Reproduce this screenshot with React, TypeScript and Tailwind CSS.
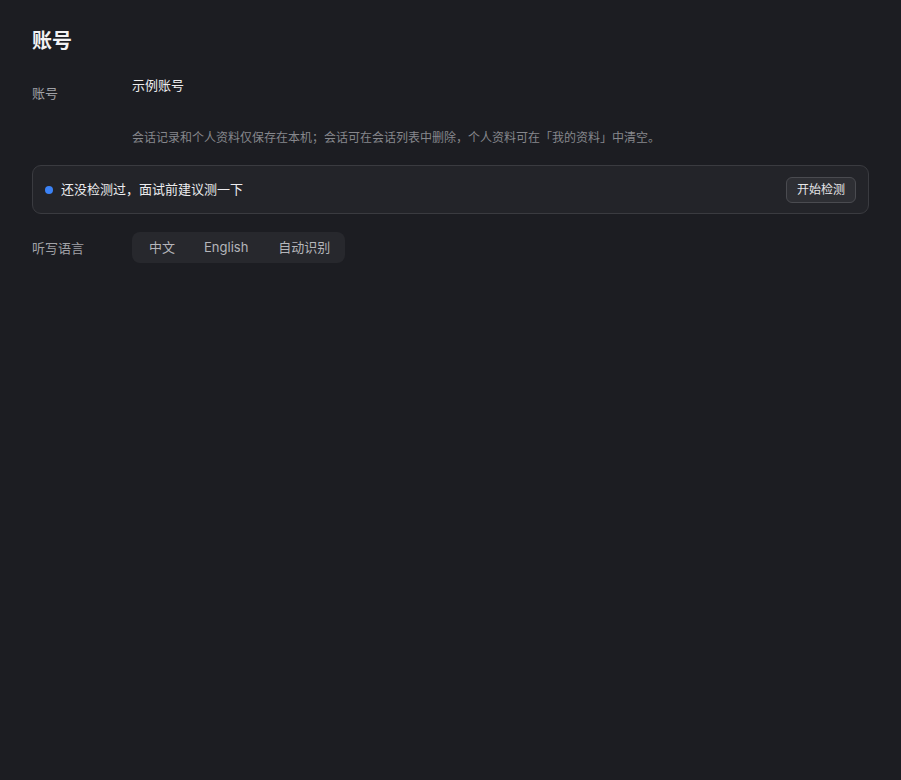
import React from "react";

export default function App() {
  return (
    <div
      className="min-h-[780px] w-full bg-[#1c1d22] px-8 text-[#e6e6e8]"
      style={{ fontFamily: 'Inter, "Noto Sans CJK SC", sans-serif' }}
    >
      <div className="pt-[27px] text-[20px] font-bold leading-[28px] text-[#f2f2f4]">账号</div>
      <div className="mt-[18px] flex">
        <div className="w-[100px] pt-[11px] text-[13px] leading-[18px] text-[#a0a1a6]">账号</div>
        <div className="pt-[3px] text-[13px] leading-[18px] text-[#ececee]">示例账号</div>
      </div>
      <div className="ml-[100px] mt-[27px] text-[12px] leading-[18px] text-[#86878c]">
        会话记录和个人资料仅保存在本机；会话可在会话列表中删除，个人资料可在「我的资料」中清空。
      </div>
      <div className="mt-[18px] flex h-[49px] items-center rounded-[9px] border border-[#3a3b40] bg-[#232429] pl-[12px] pr-[12px]">
        <span className="h-[8px] w-[8px] rounded-full bg-[#3b82f6]" />
        <span className="ml-[8px] text-[13px] text-[#ececee]">还没检测过，面试前建议测一下</span>
        <button className="ml-auto h-[26px] rounded-[6px] border border-[#4a4b50] bg-[#2e2f34] px-[10px] text-[12px] text-[#e6e6e8]">
          开始检测
        </button>
      </div>
      <div className="mt-[18px] flex items-center">
        <div className="w-[100px] pt-[2px] text-[13px] text-[#a0a1a6]">听写语言</div>
        <div className="flex h-[31px] items-center rounded-[8px] bg-[#27282d] pl-[3px] pr-0 text-[13px] text-[#b4b5ba]">
          <span className="px-[14px]">中文</span>
          <span className="px-[15px]">English</span>
          <span className="pl-[15px] pr-[15px]">自动识别</span>
        </div>
      </div>
    </div>
  );
}
